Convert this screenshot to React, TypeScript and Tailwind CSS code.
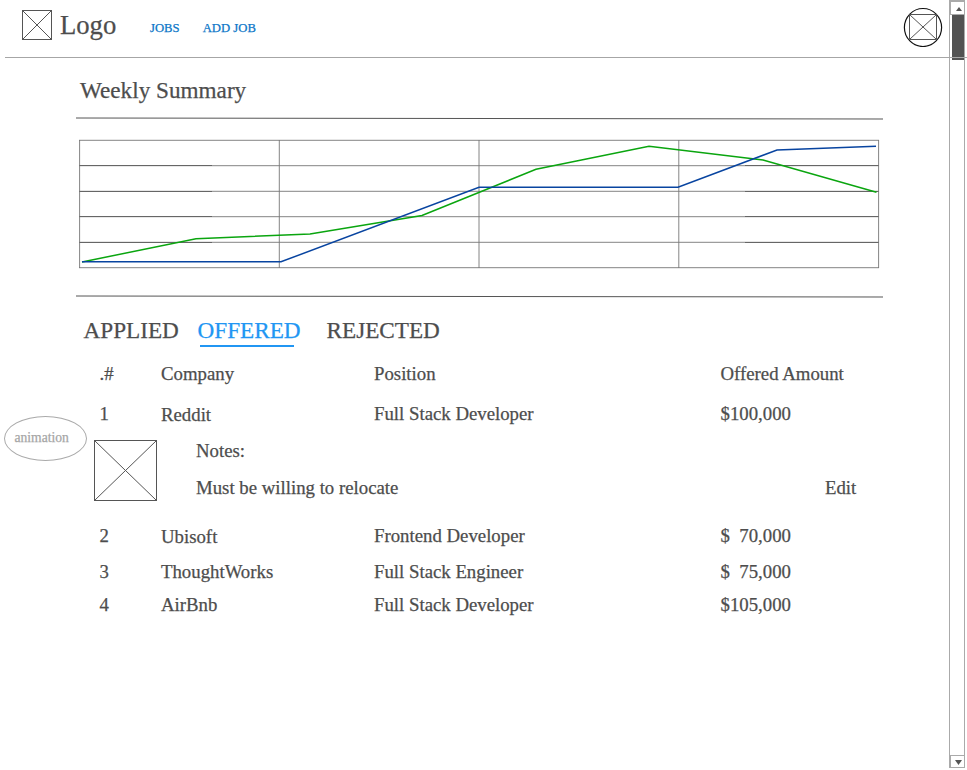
import React from "react";

const Crossed = ({ w, h, stroke = "#555" }: { w: number; h: number; stroke?: string }) => (
  <svg width={w} height={h} viewBox={`0 0 ${w} ${h}`} fill="none" className="block shrink-0">
    <rect x=".5" y=".5" width={w - 1} height={h - 1} stroke={stroke} />
    <path d={`M1 1 L${w - 1} ${h - 1} M${w - 1} 1 L1 ${h - 1}`} stroke={stroke} strokeWidth="1" />
  </svg>
);

const Divider = () => (
  <svg width="807" height="3" viewBox="0 0 807 3" className="block ml-[76px]">
    <path d="M0 1 L807 2" stroke="#555" strokeWidth="1" />
  </svg>
);

const gridRows = [0.3, 25.7, 51.3, 76.7, 102.3, 127.7];
const gridCols = [0.6, 200.3, 400, 599.8, 799.6];

const Chart = () => (
  <svg width="802" height="130" viewBox="0 0 802 130" fill="none" className="block ml-[79px] overflow-visible">
    {gridRows.map((y) => (
      <path key={y} d={`M0 ${y} H800`} stroke="#777" strokeWidth=".9" />
    ))}
    {[25.5, 51.5, 76.5, 102.5].map((y) => (
      <path key={y} d={`M0 ${y} H133 M666 ${y} H800`} stroke="#666" />
    ))}
    {gridCols.map((x) => (
      <path key={x} d={`M${x} 0 V128`} stroke="#777" strokeWidth=".9" />
    ))}
    <path d="M3 122 L117 98.7 L231 94 L343 75.5 L457 29.3 L570 6.3 L684 20 L797.5 52.3" stroke="#0aa50f" strokeWidth="1.5" />
    <path d="M3 121.8 H202 L400 47.3 H599 L698 10 L797 6.3" stroke="#0844a0" strokeWidth="1.5" />
  </svg>
);

type RowProps = { n: string; company: string; position: string; amount: string; className: string; drop?: boolean };

const Row = ({ n, company, position, amount, className, drop }: RowProps) => (
  <div className={`grid grid-cols-[61.5px_213px_346.5px_160px] pl-[99.5px] whitespace-pre ${className}`}>
    <span>{n}</span>
    <span className={drop ? "pt-px" : ""}>{company}</span>
    <span>{position}</span>
    <span>{amount}</span>
  </div>
);

export default function App() {
  return (
    <div className="relative flex h-[770px] w-[967px] overflow-hidden bg-white font-['Liberation_Serif',serif] text-[18.8px] leading-6 text-[#4d4d4d] [-webkit-text-stroke:0.25px]">
      <main className="w-[949px] shrink-0">
        <header className="flex h-[57px] items-start pl-[22px]">
          <div className="pt-[10px]"><Crossed w={30} h={30} /></div>
          <span className="ml-[8px] mt-[9px] w-[90px] text-[26.67px] leading-8">Logo</span>
          <nav className="mt-[20px] flex gap-[23px] text-[12.7px] leading-4 text-[#0b76c8]">
            <a>JOBS</a>
            <a>ADD JOB</a>
          </nav>
          <svg width="40" height="40" viewBox="0 0 40 40" fill="none" className="ml-auto mr-[6px] mt-[7px]">
            <ellipse cx="20" cy="20.5" rx="18.6" ry="19" stroke="#111" strokeWidth="1.2" />
            <path d="M9.5 7.5 H36.5" stroke="none" />
            <path d="M6.5 7.5 H33.5 V32.5 H6.5 Z" stroke="#555" />
            <path d="M7 8 L33 32 M33 8 L7 32" stroke="#555" strokeWidth="1" />
          </svg>
        </header>

        <h1 className="ml-[80px] h-[60px] pt-[19px] text-[23.2px] leading-7">Weekly Summary</h1>
        <Divider />
        <div className="h-[20px]" />
        <Chart />
        <div className="h-[25px]" />
        <Divider />

        <div className="flex h-[64px] pl-[83.5px] pt-[18px] text-[23.2px] leading-7">
          <span className="w-[114px]">APPLIED</span>
          <div className="w-[129px] text-[#2196f3]">
            <div>OFFERED</div>
            <div className="ml-[2.5px] mt-px h-[2px] w-[94px] bg-[#2196f3]" />
          </div>
          <span>REJECTED</span>
        </div>

        <Row n=".#" company="Company" position="Position" amount="Offered Amount" className="h-[40px]" />
        <Row n="1" company="Reddit" position="Full Stack Developer" amount="$100,000" drop className="h-[37px]" />
        <div className="flex h-[85px] pl-[94px]">
          <div className="pt-px"><Crossed w={63} h={61} /></div>
          <div className="ml-[39px]">
            <p>Notes:</p>
            <p className="mt-[13px] w-[629px]">Must be willing to relocate</p>
          </div>
          <span className="pt-[37px]">Edit</span>
        </div>
        <Row n="2" company="Ubisoft" position="Frontend Developer" amount="$  70,000" drop className="h-[36px]" />
        <Row n="3" company="ThoughtWorks" position="Full Stack Engineer" amount="$  75,000" className="h-[33px]" />
        <Row n="4" company="AirBnb" position="Full Stack Developer" amount="$105,000" className="h-[33px]" />
      </main>

      <aside className="flex h-[768px] w-4 flex-col border-x border-b border-[#aaa]">
        <div className="flex h-[15px] items-end justify-center border-b border-l border-t-2 border-[#aaa] pb-[3px] pl-[2px]">
          <svg width="6" height="4" viewBox="0 0 6 4"><path d="M3 0 L6 4 H0 Z" fill="#555" /></svg>
        </div>
        <div className="ml-[2px] h-[45px] bg-[#525252]" />
        <div className="flex-1" />
        <div className="flex h-[12px] items-center justify-center border-l border-t border-[#aaa] pl-[2px] pt-[2px]">
          <svg width="7" height="5" viewBox="0 0 7 5"><path d="M0 0 H7 L3.5 5 Z" fill="#555" /></svg>
        </div>
      </aside>

      <div className="absolute left-[5px] top-[57px] h-px w-[962px] bg-[#a6a6a6]" />
      <div className="absolute left-[4px] top-[416px] flex h-[45px] w-[83px] items-center rounded-[50%] border border-[#aaa] pb-[2px] pl-[9.5px] text-[13.6px] leading-4 text-[#a6a6a6]">
        animation
      </div>
    </div>
  );
}
